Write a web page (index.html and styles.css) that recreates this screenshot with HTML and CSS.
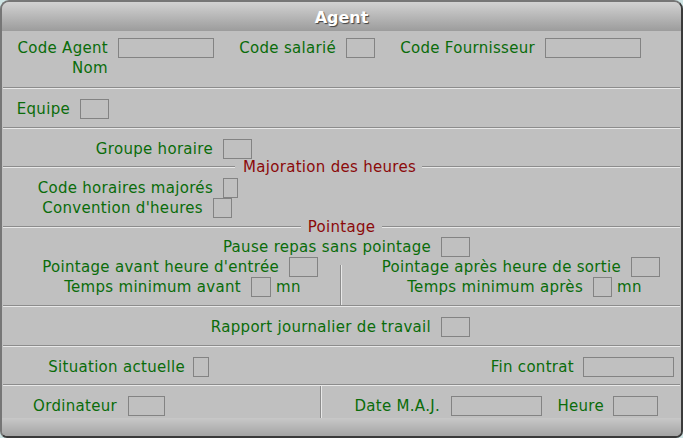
FILE: index.html
```html
<!DOCTYPE html>
<html lang="fr">
  <head>
    <meta charset="utf-8">
    <title>Agent</title>
    <link rel="stylesheet" href="styles.css">
  </head>
  <body>
    <div class="window">
      <div class="titlebar">Agent</div>

      <div class="section sec-ident">
        <div class="row">
          <span class="lbl lb-agent">Code Agent</span><span class="box bx-agent"></span>
          <span class="lbl lb-salarie">Code salarié</span><span class="box bx-small"></span>
          <span class="lbl lb-fourn">Code Fournisseur</span><span class="box bx-agent"></span>
        </div>
        <div class="row">
          <span class="lbl lb-agent">Nom</span>
        </div>
      </div>
      <div class="sep"></div>

      <div class="section sec-single">
        <div class="row">
          <span class="lbl lb-equipe">Equipe</span><span class="box bx-small"></span>
        </div>
      </div>
      <div class="sep"></div>

      <div class="section sec-groupe">
        <div class="row">
          <span class="lbl lb-groupe">Groupe horaire</span><span class="box bx-small"></span>
        </div>
      </div>
      <div class="titled-sep title-majo"><span>Majoration des heures</span></div>

      <div class="section sec-majo">
        <div class="row">
          <span class="lbl lb-groupe">Code horaires majorés</span><span class="box bx-tiny"></span>
        </div>
        <div class="row">
          <span class="lbl lb-conv">Convention d'heures</span><span class="box bx-narrow"></span>
        </div>
      </div>
      <div class="titled-sep"><span>Pointage</span></div>

      <div class="section sec-pointage">
        <div class="row">
          <span class="lbl lb-pause">Pause repas sans pointage</span><span class="box bx-small"></span>
        </div>
        <div class="split">
          <div class="col col-left">
            <div class="row">
              <span class="lbl lb-avant">Pointage avant heure d'entrée</span><span class="box bx-small"></span>
            </div>
            <div class="row">
              <span class="lbl lb-tavant">Temps minimum avant</span><span class="box bx-mn"></span><span class="unit">mn</span>
            </div>
          </div>
          <div class="vdiv vdiv-pointage"></div>
          <div class="col">
            <div class="row">
              <span class="lbl lb-apres">Pointage après heure de sortie</span><span class="box bx-small"></span>
            </div>
            <div class="row">
              <span class="lbl lb-tapres">Temps minimum après</span><span class="box bx-narrow"></span><span class="unit">mn</span>
            </div>
          </div>
        </div>
      </div>
      <div class="sep"></div>

      <div class="section sec-single">
        <div class="row">
          <span class="lbl lb-pause">Rapport journalier de travail</span><span class="box bx-small"></span>
        </div>
      </div>
      <div class="sep"></div>

      <div class="section sec-situation">
        <div class="row">
          <span class="lbl lb-situ">Situation actuelle</span><span class="box bx-situ"></span>
          <span class="lbl lb-fin">Fin contrat</span><span class="box bx-date"></span>
        </div>
      </div>
      <div class="sep"></div>

      <div class="section sec-bottom">
        <div class="split">
          <div class="col col-ordi">
            <div class="row">
              <span class="lbl lb-ordi">Ordinateur</span><span class="box bx-ordi"></span>
            </div>
          </div>
          <div class="vdiv"></div>
          <div class="col">
            <div class="row">
              <span class="lbl lb-date">Date M.A.J.</span><span class="box bx-date"></span>
              <span class="lbl lb-heure">Heure</span><span class="box bx-heure"></span>
            </div>
          </div>
        </div>
      </div>

      <div class="footer"></div>
    </div>
  </body>
</html>
```

FILE: styles.css
```css
body {
  margin: 0;
  background-color: #cfe5e5;
  font-family: "DejaVu Sans", "Liberation Sans", sans-serif;
  font-size: 15px;
  letter-spacing: 0.3px;
}

.window
{
  box-sizing: border-box;
  width: 683px;
  height: 438px;
  display: flex;
  flex-direction: column;
  background-color: #c0c0c0;
  border: 2px solid;
  border-color: #767676 #3a3a3a #3a3a3a #767676;
  border-radius: 9px 9px 7px 7px;
  overflow: hidden;
}

.titlebar
{
  box-sizing: border-box;
  height: 29px;
  padding-top: 2px;
  line-height: 27px;
  text-align: center;
  color: #ffffff;
  font-weight: bold;
  font-size: 16px;
  letter-spacing: 0;
  text-shadow: 1px 1px 1px #404040;
  background: linear-gradient(#d2d2d2, #9c9c9c);
}

.section
{
  display: flex;
  flex-direction: column;
}

.sec-ident { padding: 7px 0 9px 0; }
.sec-single { padding: 10px 0 8px 0; }
.sec-groupe { padding-top: 10px; }
.sec-majo { padding: 3px 0 1px 0; }
.sec-pointage { padding-top: 2px; }
.sec-situation { padding: 10px 0 7px 0; }
.sec-bottom { flex: 1; }

.row
{
  display: flex;
  align-items: center;
  height: 20px;
}

.lbl
{
  box-sizing: border-box;
  text-align: right;
  white-space: nowrap;
  color: #0a6c0a;
  margin-right: 10px;
}

.box
{
  box-sizing: border-box;
  height: 20px;
  border: 1px solid #838383;
}

.unit
{
  color: #0a6c0a;
  margin-left: 5px;
}

.sep
{
  margin: 0 1px;
  border-top: 1px solid #8c8c8c;
  border-bottom: 1px solid #e8e8e8;
}

.titled-sep
{
  display: flex;
  align-items: center;
  height: 16px;
  margin: 0 1px;
  color: #8b0a0a;
}

.titled-sep::before,
.titled-sep::after
{
  content: "";
  flex: 1;
  border-top: 1px solid #8c8c8c;
  border-bottom: 1px solid #e8e8e8;
}

.titled-sep span { padding: 0 7px; }
.title-majo span { padding: 0 6px 0 8px; }
.title-majo::before { flex: 0 0 232px; }

.split
{
  display: flex;
  flex: 1;
}

.col { display: flex; flex-direction: column; }
.col-left { width: 338px; padding-bottom: 8px; }
.col-ordi { width: 318px; padding-top: 10px; }
.sec-bottom .col { padding-top: 10px; }

.vdiv
{
  width: 0;
  border-left: 1px solid #8c8c8c;
  border-right: 1px solid #e8e8e8;
}

.vdiv-pointage { margin-top: 8px; }

/* label widths */
.lb-agent { width: 106px; }
.lb-salarie { width: 122px; }
.lb-fourn { width: 160px; }
.lb-equipe { width: 68px; }
.lb-groupe { width: 211px; }
.lb-conv { width: 201px; }
.lb-pause { width: 429px; }
.lb-avant { width: 277px; }
.lb-tavant { width: 239px; }
.lb-apres { width: 279px; }
.lb-tapres { width: 241px; }
.lb-situ { width: 183px; margin-right: 8px; }
.lb-fin { width: 365px; margin-right: 9px; }
.lb-ordi { width: 115px; margin-right: 11px; }
.lb-date { width: 118px; margin-right: 11px; }
.lb-heure { width: 62px; margin-right: 9px; }

/* box widths */
.bx-agent { width: 96px; }
.bx-small { width: 29px; }
.bx-tiny { width: 15px; }
.bx-narrow { width: 19px; }
.bx-mn { width: 20px; }
.bx-situ { width: 16px; }
.bx-date { width: 91px; }
.bx-ordi { width: 37px; }
.bx-heure { width: 45px; }

.footer
{
  height: 18px;
  background: linear-gradient(#c8c8c8, #a4a4a4);
}
```
